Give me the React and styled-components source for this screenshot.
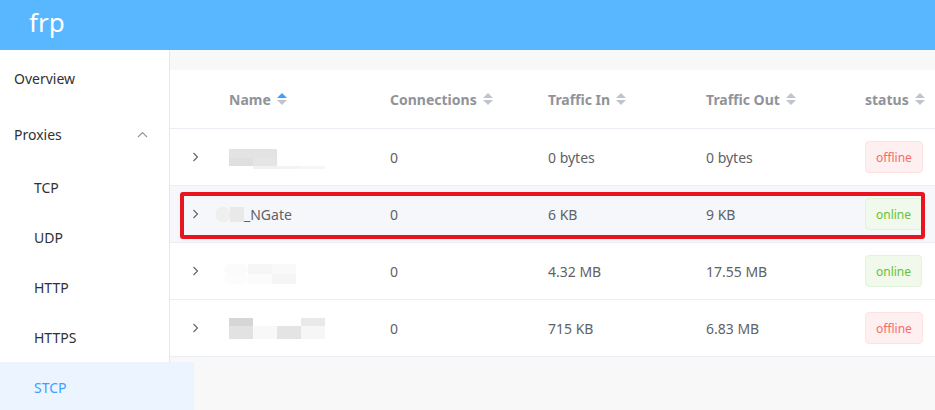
import React from "react";
import styled, { createGlobalStyle } from "styled-components";

const GlobalStyle = createGlobalStyle`
  html, body { margin: 0; padding: 0; }
  body {
    font-family: "Noto Sans", "Liberation Sans", sans-serif;
    width: 935px;
    height: 410px;
    overflow: hidden;
    background: #fff;
  }
  * { box-sizing: border-box; }
`;

const Page = styled.div`
  display: flex;
  flex-direction: column;
  height: 410px;
  overflow: hidden;
`;

const Header = styled.header`
  height: 50px;
  flex: none;
  background: #58b7ff;
  display: flex;
  align-items: center;
  padding-left: 29px;
`;

const Logo = styled.div`
  color: #fff;
  font-size: 26px;
  line-height: 1;
  margin-top: -6px;
`;

const Body = styled.div`
  flex: 1;
  display: flex;
  min-height: 0;
`;

const Sidebar = styled.nav`
  width: 170px;
  flex: none;
  background: #fff;
  border-right: 1px solid #e6e6e6;
  display: flex;
  flex-direction: column;
`;

const MenuItem = styled.div`
  height: 56px;
  flex: none;
  display: flex;
  align-items: center;
  justify-content: space-between;
  padding: 0 21px 0 14px;
  font-size: 14px;
  color: #303133;
`;

const SubItem = styled.div`
  height: 50px;
  flex: none;
  display: flex;
  align-items: center;
  padding-left: 34px;
  font-size: 14px;
  color: ${(p) => (p.$active ? "#409eff" : "#303133")};
  background: ${(p) => (p.$active ? "#ecf5ff" : "transparent")};
  width: ${(p) => (p.$active ? "194px" : "auto")};
  position: relative;
  z-index: 2;
`;

const Main = styled.main`
  flex: 1;
  background: #f8f8f8;
  padding-top: 20px;
  min-width: 0;
`;

const Table = styled.div`
  background: #fff;
`;

const Grid = styled.div`
  display: grid;
  grid-template-columns: 49px 161px 158px 158px 159px 1fr;
  align-items: center;
  border-bottom: 1px solid #ebeef5;
  position: relative;
  height: ${(p) => (p.$head ? "59px" : "57px")};
  background: ${(p) => (p.$hover ? "#f5f7fa" : "#fff")};
`;

const HeadCell = styled.div`
  padding-left: 10px;
  font-size: 14px;
  font-weight: 700;
  color: #909399;
  display: flex;
  align-items: center;
`;

const Cell = styled.div`
  padding-left: 10px;
  font-size: 14px;
  color: #606266;
  display: flex;
  align-items: center;
`;

const ExpandCell = styled.div`
  display: flex;
  justify-content: center;
  align-items: center;
  padding-left: 2px;
`;

const CaretWrap = styled.span`
  display: inline-flex;
  flex-direction: column;
  gap: 2px;
  margin-left: 6px;
`;

const CaretUp = styled.i`
  width: 0;
  height: 0;
  border-left: 5px solid transparent;
  border-right: 5px solid transparent;
  border-bottom: 5px solid ${(p) => (p.$on ? "#409eff" : "#c0c4cc")};
`;

const CaretDown = styled.i`
  width: 0;
  height: 0;
  border-left: 5px solid transparent;
  border-right: 5px solid transparent;
  border-top: 5px solid #c0c4cc;
`;

const Tag = styled.span`
  display: inline-flex;
  align-items: center;
  height: 32px;
  padding: 0 10px;
  font-size: 12px;
  border-radius: 4px;
  border: 1px solid ${(p) => (p.$online ? "#e1f3d8" : "#fde2e2")};
  background: ${(p) => (p.$online ? "#f0f9eb" : "#fef0f0")};
  color: ${(p) => (p.$online ? "#67c23a" : "#f56c6c")};
`;

const Annotation = styled.div`
  position: absolute;
  left: 10px;
  top: 6px;
  width: 745px;
  height: 47px;
  border: 4px solid #e8141e;
  border-radius: 3px;
  pointer-events: none;
  z-index: 3;
`;

const Mosaic = styled.span`
  display: inline-grid;
  grid-template-columns: repeat(${(p) => p.$cols}, ${(p) => p.$w}px);
  margin-left: ${(p) => p.$ml || 0}px;
  margin-top: ${(p) => p.$mt || 0}px;
`;

const Tile = styled.span`
  display: block;
  height: ${(p) => p.$h}px;
  background: ${(p) => p.$c};
  border-radius: ${(p) => p.$r || 0}px;
`;

const NameText = styled.span`
  color: #606266;
`;

const Chevron = () => (
  <svg width="7" height="10" viewBox="0 0 7 10">
    <polyline points="1.5,1 5.5,5 1.5,9" fill="none" stroke="#606266" strokeWidth="1.1" />
  </svg>
);

const ChevronUp = () => (
  <svg width="11" height="7" viewBox="0 0 11 7">
    <polyline points="1,6 5.5,1.5 10,6" fill="none" stroke="#909399" strokeWidth="1.1" />
  </svg>
);

const renderMosaic = (m) => (
  <Mosaic $cols={m.cols} $w={m.w} $ml={m.ml} $mt={m.mt}>
    {m.tiles.map((t, i) => (
      <Tile key={i} $h={t[1]} $c={t[0]} $r={t[2]} />
    ))}
  </Mosaic>
);

const rows = [
  {
    mosaic: {
      cols: 4, w: 24, mt: 4,
      tiles: [
        ["#e3e3e3", 9], ["#e3e3e3", 9], ["transparent", 9], ["transparent", 9],
        ["#dfdfdf", 8], ["#e5e5e5", 8], ["transparent", 8], ["transparent", 8],
        ["transparent", 3], ["#f1f1f1", 3], ["#f3f3f3", 3], ["#f6f6f6", 3],
      ],
    },
    conn: "0", tin: "0 bytes", tout: "0 bytes", online: false,
  },
  {
    mosaic: {
      cols: 2, w: 14, ml: -13,
      tiles: [["#efefef", 15, 6], ["#e9e9e9", 15]],
    },
    text: "_NGate",
    conn: "0", tin: "6 KB", tout: "9 KB", online: true, hover: true, mark: true,
  },
  {
    mosaic: {
      cols: 3, w: 24, ml: -5, mt: 6,
      tiles: [
        ["#fbfbfb", 10, 6], ["#f6f6f6", 10], ["#f9f9f9", 10],
        ["#fcfcfc", 10, 6], ["#fbfbfb", 10], ["#f5f5f5", 10],
      ],
    },
    conn: "0", tin: "4.32 MB", tout: "17.55 MB", online: true,
  },
  {
    mosaic: {
      cols: 4, w: 24,
      tiles: [
        ["#d6d6d6", 8], ["transparent", 8], ["transparent", 8], ["#e9e9e9", 8],
        ["#e2e2e2", 13], ["#f8f8f8", 13], ["#e4e4e4", 13], ["#f6f6f6", 13],
      ],
    },
    conn: "0", tin: "715 KB", tout: "6.83 MB", online: false,
  },
];

const Sort = ({ on }) => (
  <CaretWrap>
    <CaretUp $on={on} />
    <CaretDown />
  </CaretWrap>
);

export default function App() {
  return (
    <Page>
      <GlobalStyle />
      <Header>
        <Logo>frp</Logo>
      </Header>
      <Body>
        <Sidebar>
          <MenuItem>Overview</MenuItem>
          <MenuItem>
            Proxies
            <ChevronUp />
          </MenuItem>
          <SubItem>TCP</SubItem>
          <SubItem>UDP</SubItem>
          <SubItem>HTTP</SubItem>
          <SubItem>HTTPS</SubItem>
          <SubItem $active>STCP</SubItem>
        </Sidebar>
        <Main>
          <Table>
            <Grid $head>
              <div />
              <HeadCell>Name<Sort on /></HeadCell>
              <HeadCell>Connections<Sort /></HeadCell>
              <HeadCell>Traffic In<Sort /></HeadCell>
              <HeadCell>Traffic Out<Sort /></HeadCell>
              <HeadCell>status<Sort /></HeadCell>
            </Grid>
            {rows.map((r, i) => (
              <Grid key={i} $hover={r.hover}>
                <ExpandCell><Chevron /></ExpandCell>
                <Cell>
                  {renderMosaic(r.mosaic)}
                  {r.text && <NameText>{r.text}</NameText>}
                </Cell>
                <Cell>{r.conn}</Cell>
                <Cell>{r.tin}</Cell>
                <Cell>{r.tout}</Cell>
                <Cell>
                  <Tag $online={r.online}>{r.online ? "online" : "offline"}</Tag>
                </Cell>
                {r.mark && <Annotation />}
              </Grid>
            ))}
          </Table>
        </Main>
      </Body>
    </Page>
  );
}
